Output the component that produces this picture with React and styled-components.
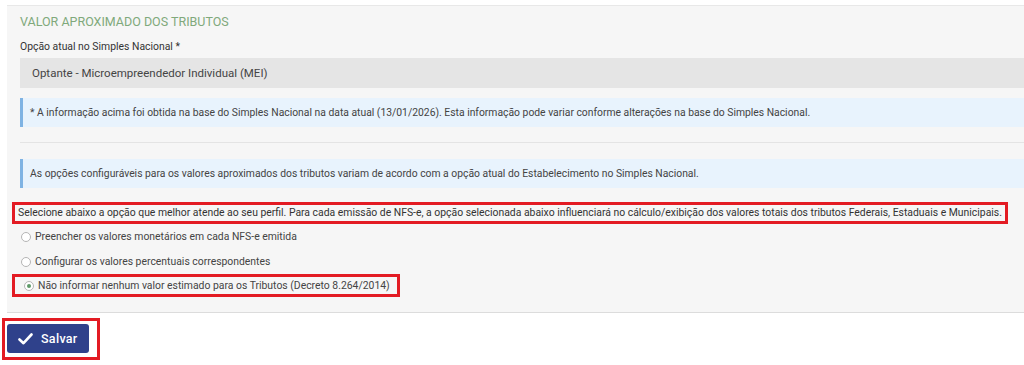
import React from "react";
import styled, { createGlobalStyle } from "styled-components";

const GlobalStyle = createGlobalStyle`
  html, body {
    margin: 0;
    padding: 0;
    background: #ffffff;
    font-family: Roboto, "Liberation Sans", Arial, sans-serif;
    color: #444444;
  }
`;

const Page = styled.div`
  padding-top: 5px;
`;

const Panel = styled.section`
  margin-left: 7px;
  background: #f6f6f6;
  border-top: 1px solid #e8e8e8;
  border-bottom: 1px solid #dcdcdc;
  padding: 8px 0 15px 13px;
`;

const Title = styled.h2`
  margin: 0;
  font-size: 12.5px;
  line-height: 16px;
  font-weight: 400;
  color: #80a97b;
  text-transform: uppercase;
`;

const Label = styled.label`
  display: block;
  margin-top: 10px;
  font-size: 10.4px;
  line-height: 14px;
  color: #333333;
`;

const SelectBox = styled.div`
  margin-top: 4px;
  height: 30px;
  line-height: 30px;
  padding-left: 12px;
  background: #e5e5e5;
  font-size: 11.5px;
  color: #444444;
`;

const Info = styled.div`
  margin-top: ${(p) => p.$top}px;
  height: 29px;
  line-height: 29px;
  padding-left: 7px;
  background: #e8f3fd;
  border-left: 3px solid #7fb3e3;
  font-size: 10.35px;
  color: #444444;
`;

const Divider = styled.hr`
  margin: 15px 0 0;
  border: 0;
  border-top: 1px solid #e4e4e4;
`;

const Marked = styled.div`
  width: fit-content;
  margin-left: ${(p) => p.$left}px;
  border: 3px solid #e31b23;
  padding: 0 3px;
  line-height: 16px;
  font-size: 10.4px;
  color: #333333;
  white-space: nowrap;
`;

const Notice = styled(Marked)`
  margin-top: 14px;
`;

const Options = styled.div`
  display: flex;
  flex-direction: column;
`;

const Option = styled.label`
  display: flex;
  align-items: center;
  gap: 4px;
  height: ${(p) => (p.$boxed ? 17 : 25)}px;
  padding-left: ${(p) => (p.$boxed ? 6 : 1)}px;
  padding-right: ${(p) => (p.$boxed ? 4 : 0)}px;
  font-size: 10.4px;
  color: #444444;
`;

const Radio = styled.span`
  box-sizing: border-box;
  width: 10px;
  height: 10px;
  border-radius: 50%;
  border: 1px solid #b5b5b5;
  background: #ffffff;
  display: flex;
  align-items: center;
  justify-content: center;

  &::after {
    content: "";
    width: 4px;
    height: 4px;
    border-radius: 50%;
    background: ${(p) => (p.$checked ? "#5e9a68" : "transparent")};
  }
`;

const Footer = styled.div`
  padding: 5px 0 0 2px;
`;

const ButtonFrame = styled.div`
  display: inline-block;
  border: 3px solid #e31b23;
  padding: 3px 8px 4px 2px;
`;

const SaveButton = styled.button`
  display: flex;
  align-items: center;
  gap: 8px;
  width: 82px;
  height: 29px;
  padding: 0 0 0 11px;
  border: 0;
  border-radius: 3px;
  background: #2f418b;
  color: #ffffff;
  font-family: Roboto, "Liberation Sans", Arial, sans-serif;
  font-size: 12.5px;
  font-weight: 500;
  letter-spacing: 0.3px;
`;

const options = [
  { text: "Preencher os valores monetários em cada NFS-e emitida" },
  { text: "Configurar os valores percentuais correspondentes" },
  {
    text: "Não informar nenhum valor estimado para os Tributos (Decreto 8.264/2014)",
    checked: true,
  },
];

const CheckIcon = () => (
  <svg width="15" height="12" viewBox="0 0 15 12">
    <polyline
      points="1.5,6.5 5.5,10.2 13.5,1.5"
      fill="none"
      stroke="#ffffff"
      strokeWidth="2.6"
      strokeLinecap="round"
      strokeLinejoin="round"
    />
  </svg>
);

export default function App() {
  return (
    <>
      <GlobalStyle />
      <Page>
        <Panel>
          <Title>Valor aproximado dos tributos</Title>
          <Label>Opção atual no Simples Nacional *</Label>
          <SelectBox>Optante - Microempreendedor Individual (MEI)</SelectBox>
          <Info $top={10}>
            * A informação acima foi obtida na base do Simples Nacional na data atual
            (13/01/2026). Esta informação pode variar conforme alterações na base do
            Simples Nacional.
          </Info>
          <Divider />
          <Info $top={16}>
            As opções configuráveis para os valores aproximados dos tributos variam de
            acordo com a opção atual do Estabelecimento no Simples Nacional.
          </Info>
          <Notice $left={-8}>
            Selecione abaixo a opção que melhor atende ao seu perfil. Para cada emissão
            de NFS-e, a opção selecionada abaixo influenciará no cálculo/exibição dos
            valores totais dos tributos Federais, Estaduais e Municipais.
          </Notice>
          <Options>
            {options.map((o) =>
              o.checked ? (
                <Marked key={o.text} $left={-8}>
                  <Option $boxed>
                    <Radio $checked />
                    {o.text}
                  </Option>
                </Marked>
              ) : (
                <Option key={o.text}>
                  <Radio />
                  {o.text}
                </Option>
              )
            )}
          </Options>
        </Panel>
        <Footer>
          <ButtonFrame>
            <SaveButton>
              <CheckIcon />
              Salvar
            </SaveButton>
          </ButtonFrame>
        </Footer>
      </Page>
    </>
  );
}
